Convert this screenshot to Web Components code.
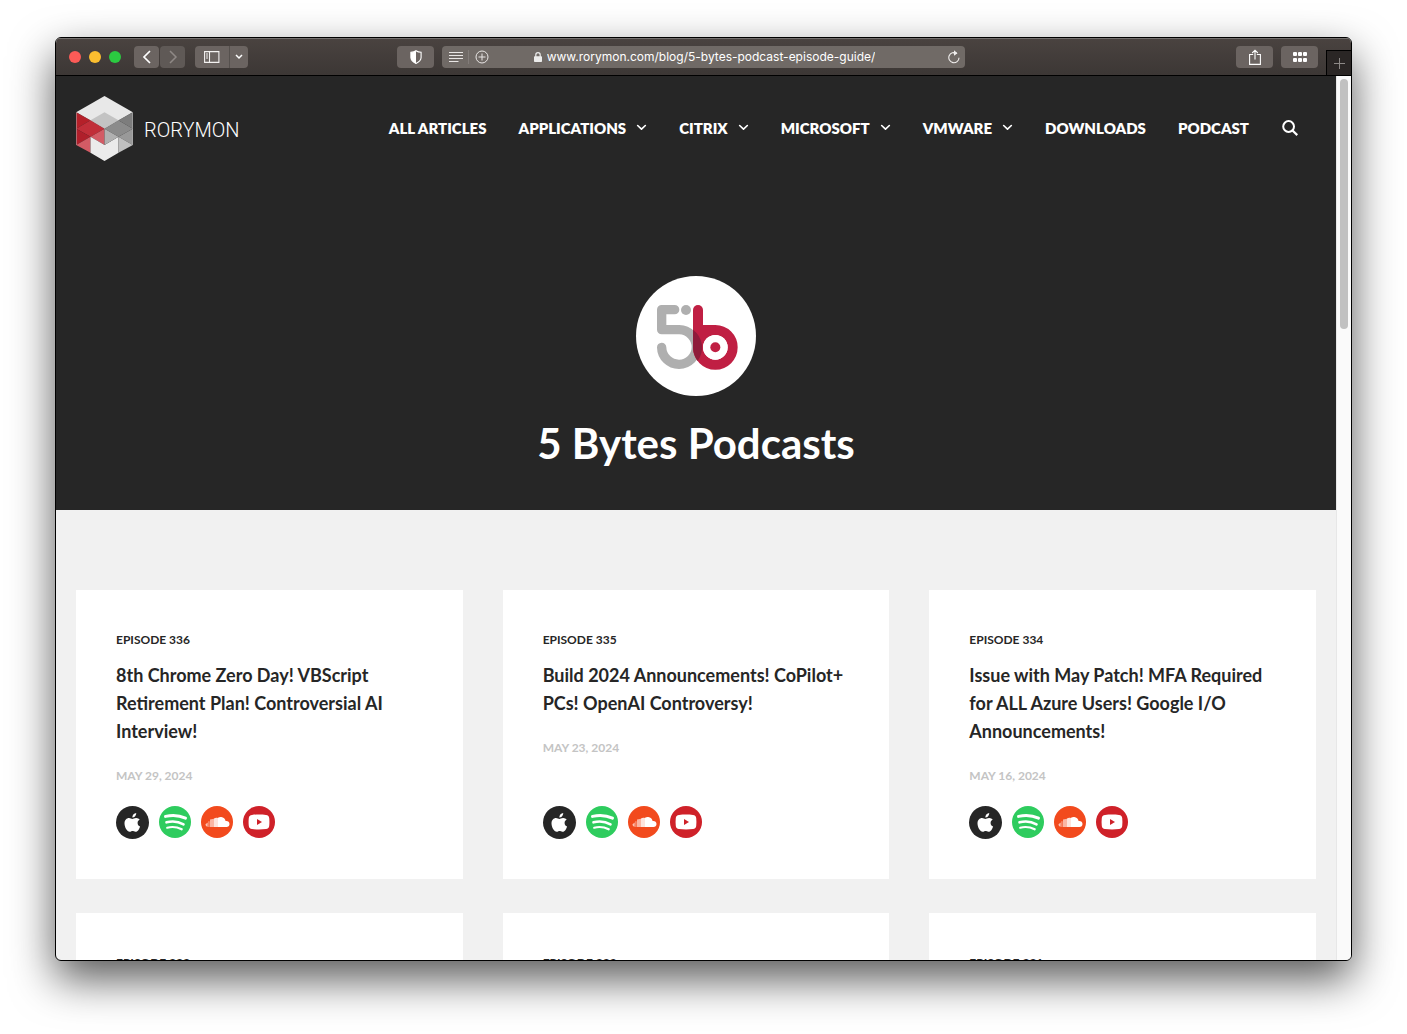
<!DOCTYPE html>
<html lang="en">
<head>
<meta charset="utf-8">
<title>5 Bytes Podcasts</title>
<style>
html, body { margin: 0; height: 100%; background: #fff; }
body { box-sizing: border-box; padding: 37px 55px 73px; font-family: Lato, "Liberation Sans", sans-serif; color: #262626; overflow: hidden; }
</style>
</head>
<body>
<browser-window>
  <browser-toolbar slot="toolbar" url="www.rorymon.com/blog/5-bytes-podcast-episode-guide/"></browser-toolbar>
  <site-header>
    <nav-item>All Articles</nav-item>
    <nav-item menu>Applications</nav-item>
    <nav-item menu>Citrix</nav-item>
    <nav-item menu>Microsoft</nav-item>
    <nav-item menu>VMware</nav-item>
    <nav-item>Downloads</nav-item>
    <nav-item>Podcast</nav-item>
  </site-header>
  <page-hero>5 Bytes Podcasts</page-hero>
  <episode-grid>
    <episode-card number="336" date="May 29, 2024">8th Chrome Zero Day! VBScript Retirement Plan! Controversial AI Interview!</episode-card>
    <episode-card number="335" date="May 23, 2024">Build 2024 Announcements! CoPilot+ PCs! OpenAI Controversy!</episode-card>
    <episode-card number="334" date="May 16, 2024">Issue with May Patch! MFA Required for ALL Azure Users! Google I/O Announcements!</episode-card>
    <episode-card number="333"></episode-card>
    <episode-card number="332"></episode-card>
    <episode-card number="331"></episode-card>
  </episode-grid>
</browser-window>

<script>
const ICONS = {
  back: ['0 0 10 14', '<path d="M8 1 2 7l6 6" fill="none" stroke="#fff" stroke-width="1.7"/>'],
  forward: ['0 0 10 14', '<path d="m2 1 6 6-6 6" fill="none" stroke="#8f8986" stroke-width="1.5"/>'],
  sidebar: ['0 0 16 12', '<path d="M.6.6h14.3v10.8H.6zM5.5.6v10.8M2 3h2M2 5h2M2 7h2" fill="none" stroke="#f4f2f1" stroke-width="1.1"/>'],
  down: ['0 0 8 6', '<path d="m1 1 3 3 3-3" fill="none" stroke="#fff" stroke-width="1.5"/>'],
  shield: ['0 0 12 14', '<path d="M6 .7C4.6 1.7 2.7 2.2.9 2.3v5.2c0 3 2.5 4.7 5.1 5.9 2.6-1.2 5.1-2.9 5.1-5.9V2.3C9.3 2.2 7.4 1.700 6 .7z" fill="none" stroke="#fff" stroke-width="1.1"/><path d="M6 .7C4.6 1.7 2.7 2.2.9 2.3v5.2c0 3 2.5 4.7 5.1 5.9z" fill="#fff"/>'],
  reader: ['0 0 14 10', '<path d="M0 .5h14M0 3.5h14M0 6.5h14M0 9.500h9.500" stroke="#e9e6e5"/>'],
  add: ['0 0 14 14', '<g fill="none" stroke="#e9e6e5"><circle cx="7" cy="7" r="6"/><path d="M7 3.500v7M3.500 7h7"/></g>'],
  lock: ['0 0 8 10', '<rect y="4.3" width="8" height="5.7" rx=".8" fill="#ececeb"/><path d="M1.8 5V2.9a2.2 2.2 0 0 1 4.4 0V5" fill="none" stroke="#ececeb" stroke-width="1.2"/>'],
  reload: ['0 0 12 14', '<path d="M8.600 3.300A5.100 5.100 0 1 0 11 7.700M5.300 2.900l3.500.5" fill="none" stroke="#f0eeed" stroke-width="1.1"/><path d="M6 .2 9.500 3.300 6 5.800z" fill="#f0eeed"/>'],
  share: ['0 0 12 16', '<path d="M4.200 5.500H.6v9.900h10.800V5.500H7.800M6 10.500V1.500M3.200 4 6 1.200 8.800 4" fill="none" stroke="#fff" stroke-width="1.1"/>'],
  tiles: ['0 0 14 10', '<g fill="#fff"><rect width="4" height="4" rx="1"/><rect x="5" width="4" height="4" rx="1"/><rect x="10" width="4" height="4" rx="1"/><rect y="6" width="4" height="4" rx="1"/><rect x="5" y="6" width="4" height="4" rx="1"/><rect x="10" y="6" width="4" height="4" rx="1"/></g>'],
  plus: ['0 0 11 11', '<path d="M5.500 0v11M0 5.500h11" stroke="#8d8987"/>'],
  chevron: ['0 0 10 6', '<path d="m1.500 1.200 3.500 3.300L8.500 1.200" fill="none" stroke="#fff" stroke-width="1.500" stroke-linecap="round" stroke-linejoin="round"/>'],
  search: ['0 0 16 16', '<circle cx="6.600" cy="6.500" r="5.400" fill="none" stroke="#fff" stroke-width="2"/><path d="m10.500 10.500 4.800 4.600" stroke="#fff" stroke-width="2.300"/>'],
  cube: ['78 198 170 195', `
    <path d="M163 198l85 49-85 49-85-49z" fill="#e8e8e8"/><path d="M163 247l42 24-42 25-42-25z" fill="#c3c3c3"/>
    <path d="M78 247l43 24-43 25z" fill="#b52029"/><path d="M121 271l42 25-42 24-43-24z" fill="#c12e39"/>
    <path d="M78 296l43 24-43 25z" fill="#b01f2b"/><path d="M78 345l43-25v48zM121 320l42-24v49z" fill="#d35b65"/>
    <path d="M121 320l42 25 42-25v48l-42 25-42-25z" fill="#ebebeb"/>
    <path d="M248 247l-43 24 43 25z" fill="#7d7d7d"/><path d="M205 271l43 25-43 24-42-24z" fill="#8b8b8b"/>
    <path d="M248 296l-43 24 43 25z" fill="#999"/><path d="M163 296l42 24-42 25z" fill="#b1b1b1"/><path d="M205 320l43 25-43 23z" fill="#c0c0c0"/>
    <path d="M78 247l85 49 85-49" fill="none" stroke="#777" stroke-opacity=".3" stroke-width="1.500"/>
    <path d="M78 247v98M248 247v98" stroke="#ddd" stroke-opacity=".6" stroke-width="3"/>`],
  fiveb: ['48 48 360 360', `
    <circle cx="228" cy="228" r="180" fill="#fff"/>
    <path d="M164 149h-39v60h53a52 52 0 1 1-53 53" fill="none" stroke="#afafaf" stroke-width="28" stroke-linecap="round" stroke-linejoin="round"/>
    <circle cx="198" cy="150" r="15" fill="#afafaf"/>
    <g fill="none" stroke="#c01f43" stroke-width="30"><path d="M234 150v112" stroke-linecap="round"/><circle cx="286" cy="262" r="52"/><path d="M234 210h52"/></g>
    <circle cx="286" cy="262" r="37" fill="#fff"/><circle cx="286" cy="262" r="15" fill="#c01f43"/>
    <path d="M219 209a67 67 0 0 1 14 94 67 67 0 0 1-14-41z" fill="#8f1b3a"/>`],
  apple: ['0 0 33 33', '<circle cx="16.500" cy="16.500" r="16.500" fill="#262626"/><path d="M20.200 7c.1 1.300-.4 2.400-1.100 3.200-.7.8-1.700 1.300-2.700 1.200-.1-1.200.4-2.300 1.100-3.100.7-.7 1.800-1.200 2.700-1.300zM23.700 13.600c-1.300.8-2.100 1.900-2.100 3.400 0 1.700 1 3 2.500 3.600-.6 1.900-2 5-3.900 5.100-1.200 0-1.700-.8-3.200-.8s-2 .7-3.200.8c-2.700.1-5.300-4.600-5.300-8.200 0-3.500 2.200-5.300 4.500-5.400 1.400 0 2.500.9 3.400.9.800 0 2.200-1 3.900-.9 1.400.1 2.600.6 3.400 1.500z" fill="#fff"/>'],
  spotify: ['0 0 32 32', '<circle cx="16" cy="16" r="16" fill="#2ecc5e"/><g fill="none" stroke="#fff" stroke-linecap="round"><path d="M6.500 10.400c7-1.600 14.300-.9 20 1.800" stroke-width="3"/><path d="M7.500 16.300c6-1.600 12-.8 17 2" stroke-width="2.600"/><path d="M8.200 21.700c5-1.300 10-.7 14.500 1.600" stroke-width="2.200"/></g>'],
  soundcloud: ['0 0 32 32', '<circle cx="16" cy="16" r="16" fill="#f24a1d"/><path d="M17 11.800c1-.6 2-.9 3.200-.8 2.400.2 4 1.800 4.400 4.100 2-.4 3.900.8 3.900 2.900 0 1.800-1.300 3-3 3H17z" fill="#fff"/><path d="M13 12.400c1.400-.8 2.500-.9 4-.3V21h-4z" fill="#fff" opacity=".85"/><path d="M9 13.500l4-.8V21H9z" fill="#fff" opacity=".6"/><path d="M4.500 18.200l2.200-1.700v4.200c-1.300-.2-2.200-1.200-2.200-2.500zM7.500 15.200h.9V21h-.9z" fill="#fff" opacity=".65"/>'],
  youtube: ['0 0 32 32', '<circle cx="16" cy="16" r="16" fill="#cf2129"/><path d="M9 8.900c4.500-.5 9.500-.5 14 0 2 .2 3 1.300 3.200 3 .3 2.700.3 5.500 0 8.200-.2 1.700-1.200 2.800-3.200 3-4.500.5-9.500.5-14 0-2-.2-3-1.300-3.200-3-.3-2.700-.3-5.500 0-8.200.2-1.700 1.200-2.800 3.200-3z" fill="#fff"/><path d="M14 12.900v6.200l5-3.100z" fill="#cf2129"/>']
};

const icon = (name, w, h = w) =>
  `<svg viewBox="${ICONS[name][0]}" width="${w}" height="${h}" aria-hidden="true">${ICONS[name][1]}</svg>`;

class ShadowElement extends HTMLElement {
  connectedCallback() {
    if (this.shadowRoot) return;
    this.attachShadow({ mode: 'open' }).innerHTML =
      `<style>*{box-sizing:border-box}svg{display:block;flex:none}${this.css()}</style>${this.html()}`;
  }
}

customElements.define('browser-window', class extends ShadowElement {
  css() { return `
    :host{display:flex;flex-direction:column;height:100%;box-sizing:border-box;border:1px solid #000;border-radius:6px;overflow:hidden;background:#f1f1f1;box-shadow:0 18px 44px rgba(0,0,0,.66)}
    .view{display:flex;flex:1;min-height:0}
    main{flex:1;min-width:0;overflow:hidden}
    .track{width:15px;padding:3px;background:#fafafa;border-left:1px solid #e7e7e7}
    .thumb{height:250px;width:8px;border-radius:4px;background:#c1c1c1}`; }
  html() { return `<slot name="toolbar"></slot><div class="view"><main><slot></slot></main><div class="track"><div class="thumb"></div></div></div>`; }
});

customElements.define('browser-toolbar', class extends ShadowElement {
  css() { return `
    :host{display:flex;align-items:center;height:38px;flex:none;background:linear-gradient(#4a4340,#3c3735);border-bottom:1px solid #000;box-shadow:inset 0 1px #74706e;box-sizing:border-box;padding-left:13px;font-family:Inter,"Liberation Sans",sans-serif}
    .lights{display:flex;gap:8px;margin-right:13px}
    .lights i{width:12px;height:12px;border-radius:50%}
    button{height:22px;border:0;padding:0;background:#6b6461;border-radius:4px;display:flex;align-items:center;justify-content:center}
    .pair{display:flex;gap:1px;margin-right:10px}.pair button{width:25px}
    .pair .off{background:#5f5956}
    .side{display:flex}.side button:first-child{width:35px;border-radius:4px 0 0 4px;border-right:1px solid #55504d}.side button:last-child{width:18px;border-radius:0 4px 4px 0}
    .a{flex:149}.b{flex:271}
    .wide{width:37px;margin-right:8px}
    .address{display:flex;align-items:center;width:523px;height:22px;border-radius:4px;background:#706a66;padding:0 5px 0 7px}
    .address button{background:none}
    .reader{width:14px}.sep{width:1px;height:14px;background:#827c79;margin:0 6px 0 5px}
    .place{flex:1;display:flex;align-items:center;justify-content:center;gap:5px;margin-right:28px}
    input{field-sizing:content;border:0;padding:0;margin:0;outline:0;background:none;color:#fff;font:400 12px/16px Inter,"Liberation Sans",sans-serif}
    .tab{align-self:flex-end;width:25px;height:25px;border-radius:0;background:#2a2625;border:1px solid #000;border-width:1px 0 0 1px}`; }
  html() { return `
    <div class="lights"><i style="background:#fc5b57"></i><i style="background:#fbbe2f"></i><i style="background:#2bca41"></i></div>
    <div class="pair"><button aria-label="Back">${icon('back',10,14)}</button><button class="off" aria-label="Forward">${icon('forward',10,14)}</button></div>
    <div class="side"><button aria-label="Sidebar">${icon('sidebar',16,12)}</button><button aria-label="Tab groups">${icon('down',8,6)}</button></div>
    <span class="a"></span>
    <button class="wide" aria-label="Privacy report">${icon('shield',12,14)}</button>
    <div class="address">
      <button class="reader" aria-label="Reader">${icon('reader',14,10)}</button><span class="sep"></span>
      <button aria-label="Add to reading list">${icon('add',14)}</button>
      <label class="place">${icon('lock',8,10)}<input aria-label="Address" size="48" value="${this.getAttribute('url')}"></label>
      <button aria-label="Reload">${icon('reload',12,14)}</button>
    </div>
    <span class="b"></span>
    <button class="wide" aria-label="Share">${icon('share',12,16)}</button>
    <button class="wide" aria-label="Tab overview">${icon('tiles',14,10)}</button>
    <button class="tab" aria-label="New tab">${icon('plus',11)}</button>`; }
});

customElements.define('site-header', class extends ShadowElement {
  css() { return `
    :host{display:flex;align-items:center;justify-content:space-between;background:#262626;padding:20px 38px 20px 20px;color:#fff}
    .brand{display:flex;align-items:center;gap:11px;color:#fff;text-decoration:none;font:300 20px/24px Roboto,sans-serif}
    .brand span{padding-top:2px}
    nav{display:flex;align-items:center;gap:32px;padding-bottom:2px}
    button{border:0;padding:0;margin-left:1px;background:none}`; }
  html() { return `<a class="brand" href="#">${icon('cube',57,65)}<span>RORYMON</span></a>
    <nav><slot></slot><button aria-label="Search">${icon('search',16)}</button></nav>`; }
});

customElements.define('nav-item', class extends ShadowElement {
  css() { return `:host{display:block}a{display:flex;align-items:center;gap:10px;color:#fff;text-decoration:none;text-transform:uppercase;font-size:15px;line-height:20px;font-weight:800;white-space:nowrap}`; }
  html() { return `<a href="#"><span><slot></slot></span>${this.hasAttribute('menu') ? icon('chevron',11,7) : ''}</a>`; }
});

customElements.define('page-hero', class extends ShadowElement {
  css() { return `:host{display:flex;flex-direction:column;align-items:center;gap:21px;padding:95px 20px 41px;background:#262626;color:#fff}h1{margin:0;font-size:42px;line-height:52px;font-weight:700}`; }
  html() { return `${icon('fiveb',120)}<h1><slot></slot></h1>`; }
});

customElements.define('episode-grid', class extends ShadowElement {
  css() { return `:host{display:grid;grid-template-columns:repeat(3,minmax(0,1fr));gap:34px 40px;padding:80px 20px}`; }
  html() { return `<slot></slot>`; }
});

customElements.define('episode-card', class extends ShadowElement {
  css() { return `
    :host{display:flex;flex-direction:column;min-height:289px;box-sizing:border-box;padding:40px;background:#fff}
    .no,.date{font-size:12px;line-height:20px;font-weight:700;text-transform:uppercase}
    h2{margin:11px 0 21px;font-size:18px;line-height:28px;font-weight:700}
    .date{color:#c4c4c4}
    .links{display:flex;gap:10px;margin-top:auto;padding-top:20px}`; }
  html() {
    const date = this.getAttribute('date');
    return `<div class="no">Episode ${this.getAttribute('number')}</div>` + (date ? `
      <h2><slot></slot></h2><div class="date">${date}</div>
      <div class="links"><a href="#" aria-label="Apple Podcasts">${icon('apple',33)}</a><a href="#" aria-label="Spotify">${icon('spotify',32)}</a><a href="#" aria-label="SoundCloud">${icon('soundcloud',32)}</a><a href="#" aria-label="YouTube">${icon('youtube',32)}</a></div>` : '');
  }
});
</script>
</body>
</html>
